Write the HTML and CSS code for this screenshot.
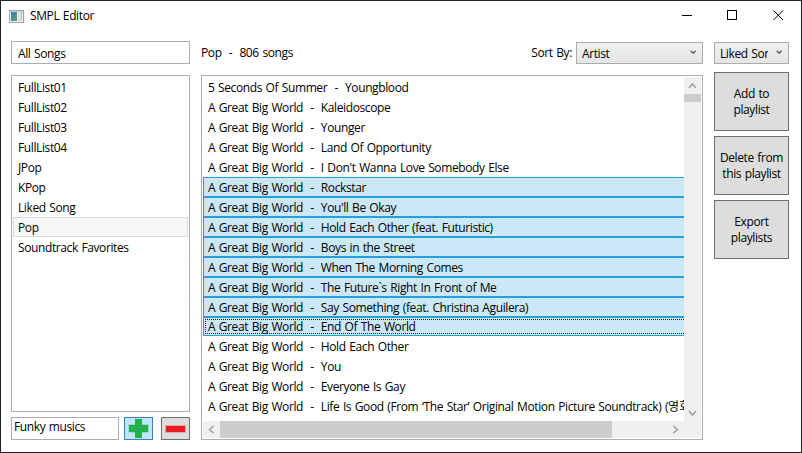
FILE: index.html
```html
<!DOCTYPE html>
<html lang="en">
<head>
<meta charset="utf-8">
<title>SMPL Editor</title>
<link rel="stylesheet" href="styles.css">
</head>
<body>
<div class="window">
  <header class="titlebar">
    <svg class="app-icon" width="15" height="13" viewBox="0 0 15 13">
      <defs><linearGradient id="g" x1="0" y1="0" x2="1" y2="1"><stop offset="0" stop-color="#4179b8"/><stop offset="1" stop-color="#55a66a"/></linearGradient></defs>
      <rect x=".5" y=".5" width="14" height="12" fill="#eef0f2" stroke="#9fa5ab"/>
      <rect x="1" y="1" width="13" height="1" fill="#c9cfd5"/>
      <rect x="2" y="2" width="6" height="9" fill="url(#g)"/>
      <rect x="9" y="2" width="3" height="9" fill="#dce3ea"/>
      <rect x="12" y="2" width="1" height="9" fill="#aebfcb"/>
    </svg>
    <span class="title">SMPL Editor</span>
    <svg class="controls" width="104" height="12" viewBox="0 0 104 12" fill="none" stroke="#000" shape-rendering="crispEdges">
      <path d="M0 5.5h10M45.5 .5h9v9h-9z"/>
      <path d="M91.5 .5l9.5 9.5M101 .5l-9.5 9.5" shape-rendering="auto"/>
    </svg>
  </header>
  <main class="content">
    <section class="left">
      <div class="all box">All Songs</div>
      <ul class="playlists box">
        <li>FullList01</li><li>FullList02</li><li>FullList03</li><li>FullList04</li><li>JPop</li><li>KPop</li><li>Liked Song</li><li class="current">Pop</li><li>Soundtrack Favorites</li>
      </ul>
      <div class="new-row">
        <div class="name box">Funky musics</div>
        <button class="tool add"><svg width="21" height="19" viewBox="0 0 21 19"><path d="M0 5h21v9h-21z" fill="#9fd6c9"/><path d="M7 0h7v6h6v7h-6v6h-7v-6h-6v-7h6z" fill="#22b14c"/></svg></button>
        <button class="tool remove"><svg width="21" height="8" viewBox="0 0 21 8"><path d="M0 0h21v8h-21z" fill="#e2aaac"/><path d="M1 1h19v6h-19z" fill="#ed1c24"/></svg></button>
      </div>
    </section>
    <section class="center">
      <div class="top">
        <span class="summary">Pop  -  806 songs</span>
        <span class="sort-label">Sort By:</span>
        <div class="combo sort"><span>Artist</span><svg width="7" height="5" viewBox="0 0 7 5"><path d="M.7 .8l2.5 2.5L5.7 .8"/></svg></div>
      </div>
      <div class="songs box">
        <ul class="view">
          <li>5 Seconds Of Summer  -  Youngblood</li>
          <li>A Great Big World  -  Kaleidoscope</li>
          <li>A Great Big World  -  Younger</li>
          <li>A Great Big World  -  Land Of Opportunity</li>
          <li>A Great Big World  -  I Don't Wanna Love Somebody Else</li>
          <li class="sel">A Great Big World  -  Rockstar</li>
          <li class="sel">A Great Big World  -  You'll Be Okay</li>
          <li class="sel">A Great Big World  -  Hold Each Other (feat. Futuristic)</li>
          <li class="sel">A Great Big World  -  Boys in the Street</li>
          <li class="sel">A Great Big World  -  When The Morning Comes</li>
          <li class="sel">A Great Big World  -  The Future`s Right In Front of Me</li>
          <li class="sel">A Great Big World  -  Say Something (feat. Christina Aguilera)</li>
          <li class="sel focus">A Great Big World  -  End Of The World</li>
          <li>A Great Big World  -  Hold Each Other</li>
          <li>A Great Big World  -  You</li>
          <li>A Great Big World  -  Everyone Is Gay</li>
          <li>A Great Big World  -  Life Is Good (From ‘The Star’ Original Motion Picture Soundtrack) (<span class="ko">영화</span></li>
        </ul>
        <div class="vbar">
          <svg width="17" height="17" viewBox="0 0 17 17"><path d="M5 11l3.500-4 3.500 4"/></svg>
          <div class="vthumb"></div>
          <svg class="end" width="17" height="17" viewBox="0 0 17 17"><path d="M5 7l3.500 4 3.500-4"/></svg>
        </div>
        <div class="hbar">
          <svg width="17" height="17" viewBox="0 0 17 17"><path d="M10.500 5l-4 3.500 4 3.500"/></svg>
          <div class="hthumb"></div>
          <svg class="end" width="17" height="17" viewBox="0 0 17 17"><path d="M6.500 5l4 3.500-4 3.500"/></svg>
        </div>
        <div class="corner"></div>
      </div>
    </section>
    <section class="right">
      <div class="combo"><span class="clip">Liked Song</span><svg width="7" height="5" viewBox="0 0 7 5"><path d="M.7 .8l2.500 2.500L5.700 .8"/></svg></div>
      <button class="action">Add to<br>playlist</button>
      <button class="action">Delete from<br>this playlist</button>
      <button class="action">Export<br>playlists</button>
    </section>
  </main>
</div>
</body>
</html>
```

FILE: styles.css
```css
* { box-sizing: border-box; }
body { margin: 0; width: 802px; height: 453px; overflow: hidden; font: 12px/16px "Open Sans", "Noto Sans CJK KR", sans-serif; letter-spacing: -0.39px; word-spacing: 0.85px; color: #000; }
ul { margin: 0; padding: 0; list-style: none; }
svg { display: block; flex: none; }
.window { height: 453px; border: 1px solid #1b262c; background: #fff; }
.titlebar { height: 30px; display: flex; align-items: center; padding: 0 15px 0 8px; }
.title { margin-left: 6px; }
.controls { margin-left: auto; }
.content { display: grid; grid-template-columns: 179px 502px 75px; column-gap: 11px; padding: 10px 0 0 10px; }
.box { border: 1px solid #abadb3; background: #fff; }
.left { display: flex; flex-direction: column; }
.all { height: 23px; padding: 4px 6px; }
.playlists { height: 337px; margin-top: 11px; padding: 1px; }
.playlists li { height: 20px; padding: 2px 4px; border: 1px solid transparent; line-height: 15px; }
.playlists .current { background: #f6f6f6; border-color: #dadada; }
.new-row { display: flex; margin-top: 5px; height: 23px; }
.name { width: 108px; padding: 1px 2px; margin-right: 5px; }
.tool { width: 29px; padding: 0; display: flex; align-items: center; justify-content: center; border: 1px solid #707070; background: #ddd; }
.add { border-color: #3c7fb1; background: #bee6fd; margin-right: 8px; }
.center { display: flex; flex-direction: column; }
.top { display: flex; height: 23px; margin-bottom: 11px; padding-top: 1px; }
.summary { white-space: pre; padding-top: 3px; }
.sort-label { margin-left: auto; padding: 3px 4px 0 0; }
.combo { height: 22px; border: 1px solid #acacac; background: linear-gradient(#f0f0f0, #e5e5e5); display: flex; align-items: center; justify-content: space-between; padding: 2px 3px 0 5px; }
.combo svg { fill: none; stroke: #606060; stroke-width: 1.3; margin-top: -4px; }
.sort { width: 127px; }
.sort svg { margin-right: 2px; }
.songs { height: 365px; padding: 1px; display: grid; grid-template: 344px 17px / 481px 17px; }
.view { overflow: hidden; }
.view li { height: 20px; padding: 3px 5px; line-height: 15px; white-space: pre; }
.view .sel { padding: 2px 4px; border: 1px solid #26a0da; border-right: 0; background: #cbe8f6; }
.view .focus { position: relative; height: 19px; padding-top: 1px; }
.focus::after { content: ""; position: absolute; inset: 1px 0 1px 1px; border: 1px dotted #222; border-right: 0; }
.ko { letter-spacing: 0.5px; }
.vbar { background: #f0f0f0; display: flex; flex-direction: column; }
.vthumb { height: 8px; background: #cdcdcd; }
.vbar .end { margin-top: auto; }
.hbar { background: #f0f0f0; display: flex; }
.hthumb { width: 392px; background: #cdcdcd; }
.hbar .end { margin-left: auto; }
.vbar svg, .hbar svg { fill: none; stroke: #a0a0a0; stroke-width: 1.6; }
.corner { background: #f0f0f0; }
.right { display: flex; flex-direction: column; padding-top: 1px; }
.clip { width: 48px; overflow: hidden; white-space: nowrap; }
.right .combo { margin-bottom: 8px; padding-right: 5px; }
.action { height: 59px; margin: 0 0 5px; padding: 0; border: 1px solid #707070; background: #ddd; font: inherit; letter-spacing: inherit; word-spacing: inherit; color: #000; }
```
